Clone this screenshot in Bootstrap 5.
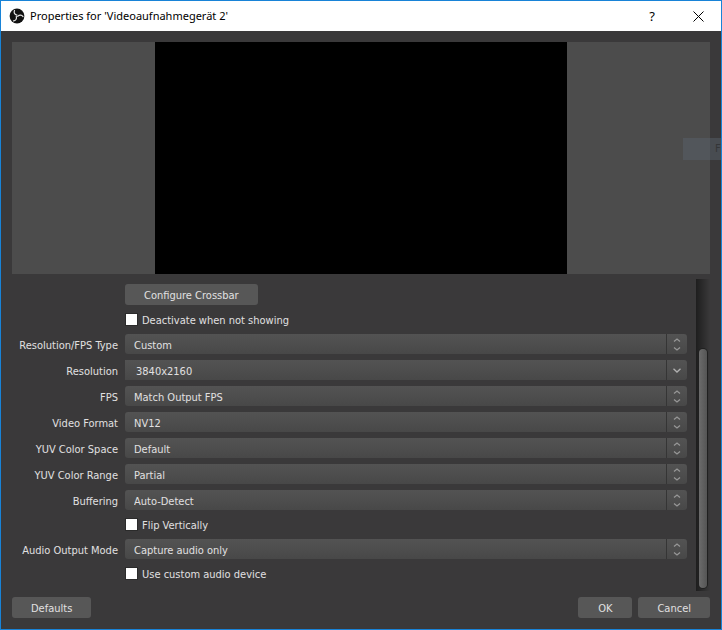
<!DOCTYPE html>
<html lang="en">
<head>
<meta charset="utf-8">
<meta name="viewport" content="width=device-width, initial-scale=1">
<title>Properties for 'Videoaufnahmegerät 2'</title>
<link href="https://cdn.jsdelivr.net/npm/bootstrap@5.3.0/dist/css/bootstrap.min.css" rel="stylesheet">
<style>
  body { font: 11px/16px "DejaVu Sans Condensed", "DejaVu Sans", sans-serif; color: #e1e0e1; background: #3a393a; }
  .dialog { border: 1px solid #1883d7; }
  .titlebar { height: 30px; background: #fff; color: #000; font-family: "Noto Sans", sans-serif; padding-left: 8px; }
  .titlebar h1 { font-size: 11px; line-height: 16px; margin: 0 0 0 5px; }
  .title-btn { width: 46px; height: 30px; border: 0; background: transparent; color: #000; padding: 0; font-size: 13px; }
  .dialog-body { padding: 11px; }
  .preview { background: #4c4c4c; }
  .preview-screen { width: 59%; aspect-ratio: 16 / 9; background: #000; }
  .form-scroll { margin-top: 5px; gap: 9px; }
  .props { display: grid; grid-template-columns: 106px 1fr; column-gap: 7px; row-gap: 6px; padding: 5px 0 9px; align-items: center; }
  .props > .prop-label { text-align: right; white-space: nowrap; padding-top: 3px; }
  .props > .only-field { grid-column: 2; justify-self: start; }
  .tool-btn { --bs-btn-color: #e1e0e1; --bs-btn-bg: #575757; --bs-btn-hover-bg: #666; --bs-btn-hover-color: #fff; --bs-btn-border-width: 0;
    --bs-btn-font-size: 11px; --bs-btn-line-height: 19px; --bs-btn-padding-y: 0; --bs-btn-padding-x: 19px; --bs-btn-border-radius: 3px;
    padding-top: 2px; min-width: 54px; }
  .combo, .combo-input, .combo-btn { height: 20px; min-height: 0; font-size: 11px; line-height: 16px; color: #e1e0e1; border: 0; }
  .combo { border-radius: 3px; padding: 4px 30px 0 9px; background-color: transparent;
    background-image: url("data:image/svg+xml,%3Csvg xmlns='http://www.w3.org/2000/svg' width='20' height='20' fill='none' stroke='%23979797' stroke-width='1.3'%3E%3Cpath d='M7 7.5 10 5l3 2.500M7 13.500 10 16l3-2.500'/%3E%3C/svg%3E"), linear-gradient(90deg, #353535, #353535), linear-gradient(#535353, #484848);
    background-size: 20px 20px, 1px 20px, 100% 100%; background-position: right 0 top 0, right 20px top 0, 0 0; background-repeat: no-repeat; }
  .combo option { background: #3a393a; }
  .combo-input, .combo-input:focus { background: linear-gradient(#535353, #484848); color: #e1e0e1; padding: 2px 11px 0; border-radius: 0; }
  .combo-btn { width: 21px; padding: 0; background: linear-gradient(#535353, #484848); border-left: 1px solid #353535; border-radius: 0 3px 3px 0; }
  .check-line { min-height: 17px; gap: 4px; }
  .check-line label { line-height: 15px; padding-top: 2px; }
  .check-line .form-check-input { width: 13px; height: 13px; margin: 0; border: 1px solid #2b2b2b; border-radius: 0; background-color: #fff; }
  .check-line .form-check-input:checked { background-color: #5a5a5a; }
  .scroll-track { width: 14px; padding: 70px 3px 3px; background: linear-gradient(90deg, #1e1e1e, #3a393a); }
  .scroll-thumb { width: 8px; border-radius: 4px; background: linear-gradient(90deg, #6b6b6b, #555); box-shadow: 0 0 0 1px #202020; }
  .footer-row { margin-top: 6px; gap: 6px; }
  .ghost-tab { top: 137px; right: 0; width: 38px; height: 22px; padding: 3px 0 0 32px; background: rgba(90, 100, 110, .45); color: #343638; }
</style>
</head>
<body>
<div class="dialog d-flex flex-column min-vh-100 position-relative">
  <header class="titlebar d-flex align-items-center flex-shrink-0">
    <svg width="16" height="16" viewBox="0 0 16 16" aria-hidden="true">
      <circle cx="8" cy="8" r="7.4" fill="#111"/>
      <g fill="none" stroke="#e4e4e4" stroke-width="1.2" stroke-linecap="round">
        <path id="blade" d="M8 7.200C5.600 6.600 4.500 4.500 5.500 2.500"/>
        <use href="#blade" transform="rotate(120 8 8)"/>
        <use href="#blade" transform="rotate(240 8 8)"/>
      </g>
    </svg>
    <h1 class="fw-normal flex-grow-1">Properties for 'Videoaufnahmegerät 2'</h1>
    <button class="title-btn" type="button" aria-label="Help">?</button>
    <button class="title-btn" type="button" aria-label="Close">
      <svg class="d-block mx-auto" width="11" height="11" viewBox="0 0 11 11" stroke="#000" stroke-width="1"><path d="M.5.5l10 10M10.500.5l-10 10"/></svg>
    </button>
  </header>

  <form class="dialog-body d-flex flex-column flex-grow-1">
    <div class="preview d-flex justify-content-center flex-grow-1"><div class="preview-screen"></div></div>

    <div class="form-scroll d-flex">
      <div class="props flex-grow-1">
        <button class="btn tool-btn only-field" type="button">Configure Crossbar</button>
        <div class="check-line only-field d-flex align-items-center">
          <input class="form-check-input" type="checkbox" id="deactivate"><label for="deactivate">Deactivate when not showing</label>
        </div>
        <label class="prop-label" for="restype">Resolution/FPS Type</label>
        <select class="form-select combo" id="restype"><option>Custom</option></select>
        <label class="prop-label" for="resolution">Resolution</label>
        <div class="d-flex">
          <input class="form-control combo-input" type="text" id="resolution" value="3840x2160">
          <button class="combo-btn d-flex align-items-center justify-content-center flex-shrink-0" type="button" aria-label="Show resolutions">
            <svg width="8" height="5" viewBox="0 0 8 5" fill="none" stroke="#b0b0b0" stroke-width="1.3"><path d="M.5.7 4 4 7.500.7"/></svg>
          </button>
        </div>
        <label class="prop-label" for="fps">FPS</label>
        <select class="form-select combo" id="fps"><option>Match Output FPS</option></select>
        <label class="prop-label" for="vformat">Video Format</label>
        <select class="form-select combo" id="vformat"><option>NV12</option></select>
        <label class="prop-label" for="space">YUV Color Space</label>
        <select class="form-select combo" id="space"><option>Default</option></select>
        <label class="prop-label" for="range">YUV Color Range</label>
        <select class="form-select combo" id="range"><option>Partial</option></select>
        <label class="prop-label" for="buffering">Buffering</label>
        <select class="form-select combo" id="buffering"><option>Auto-Detect</option></select>
        <div class="check-line only-field d-flex align-items-center">
          <input class="form-check-input" type="checkbox" id="flip"><label for="flip">Flip Vertically</label>
        </div>
        <label class="prop-label" for="audio">Audio Output Mode</label>
        <select class="form-select combo" id="audio"><option>Capture audio only</option></select>
        <div class="check-line only-field d-flex align-items-center">
          <input class="form-check-input" type="checkbox" id="customaudio"><label for="customaudio">Use custom audio device</label>
        </div>
      </div>
      <div class="scroll-track d-flex"><div class="scroll-thumb"></div></div>
    </div>

    <div class="footer-row d-flex">
      <button class="btn tool-btn me-auto" type="button">Defaults</button>
      <button class="btn tool-btn" type="submit">OK</button>
      <button class="btn tool-btn" type="button">Cancel</button>
    </div>
  </form>
  <div class="ghost-tab position-absolute overflow-hidden">F</div>
</div>
<script src="https://cdn.jsdelivr.net/npm/bootstrap@5.3.0/dist/js/bootstrap.bundle.min.js"></script>
</body>
</html>
